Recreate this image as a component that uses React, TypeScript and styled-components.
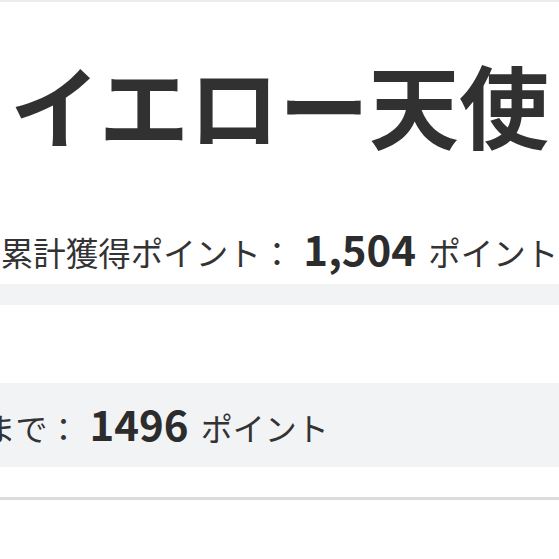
import React from 'react'
import styled, { createGlobalStyle } from 'styled-components'

const GlobalStyle = createGlobalStyle`
  body {
    margin: 0;
    background: #ffffff;
    font-family: "Noto Sans CJK JP", "Noto Sans", sans-serif;
    color: #333333;
    overflow: hidden;
  }
`
const Page = styled.div`
  display: flex;
  justify-content: center;
  overflow: hidden;
  border-top: 2px solid #ececec;
`
const Inner = styled.div`
  width: 960px;
  flex-shrink: 0;
  display: flex;
  flex-direction: column;
`
const Title = styled.h1`
  margin: 56px 0 0;
  font-size: 90px;
  line-height: 1;
  font-weight: 700;
  text-align: center;
  color: #313131;
`
const TotalRow = styled.div`
  margin-top: 76px;
  display: flex;
  justify-content: center;
  align-items: baseline;
  white-space: nowrap;
  font-size: 32.5px;
  line-height: 48px;
`
const Label = styled.span`
  font-weight: 400;
`
const Value = styled.strong`
  font-size: 42px;
  font-weight: 700;
  margin: 0 12px 0 10px;
  color: #2c2c2c;
`
const Track = styled.div`
  margin-top: 8px;
  height: 21px;
  background: #f2f3f5;
`
const NextBand = styled.div`
  margin-top: 78px;
  height: 84px;
  box-sizing: border-box;
  padding: 0 0 6px 24px;
  display: flex;
  align-items: baseline;
  align-content: center;
  flex-wrap: wrap;
  background: #f2f3f5;
  font-size: 32px;
  white-space: nowrap;
`
const Divider = styled.div`
  margin-top: 30px;
  height: 3px;
  background: #dcdcdc;
`

export default function App() {
  return <>
    <GlobalStyle />
    <Page>
      <Inner>
        <Title>イエロー天使</Title>
        <TotalRow>
          <Label>累計獲得ポイント：</Label>
          <Value>1,504</Value>
          <Label>ポイント</Label>
        </TotalRow>
        <Track />
        <NextBand>
          <Label>次のランクまで：</Label>
          <Value>1496</Value>
          <Label>ポイント</Label>
        </NextBand>
        <Divider />
      </Inner>
    </Page>
  </>
}
